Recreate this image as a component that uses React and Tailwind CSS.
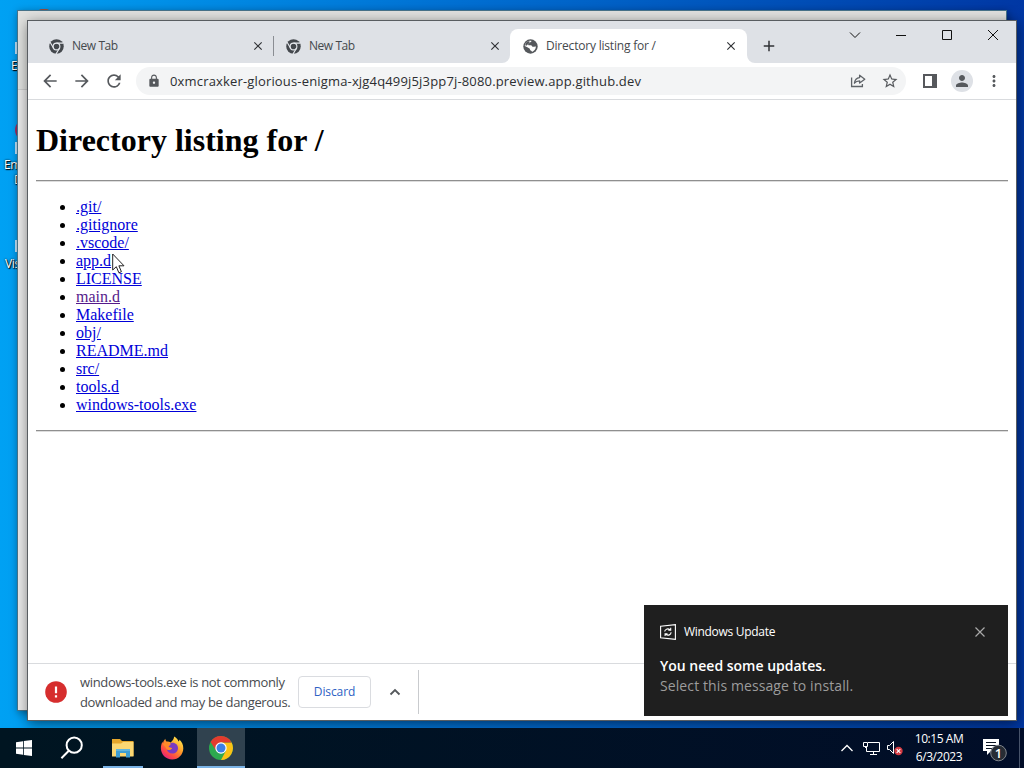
import { MdArrowBack, MdArrowForward, MdRefresh, MdLock, MdStarBorder, MdPerson, MdMoreVert, MdClose, MdAdd } from 'react-icons/md';

const files = [
  '.git/',
  '.gitignore',
  '.vscode/',
  'app.d',
  'LICENSE',
  'main.d',
  'Makefile',
  'obj/',
  'README.md',
  'src/',
  'tools.d',
  'windows-tools.exe',
];

const visited = ['main.d'];

const ShareIcon = () => (
  <svg width="16" height="16" viewBox="0 0 16 16" fill="none" stroke="#5f6368" strokeWidth="1.3">
    <path d="M1.6 4.5V13.5H12.4V11" />
    <path d="M4.4 10.2C4.8 7 6.4 4.9 9.6 4.6V2.2L14.8 6.2L9.6 10V7.8C7.4 7.8 5.7 8.5 4.4 10.2Z" strokeLinejoin="round" />
  </svg>
);

const SidePanelIcon = () => (
  <svg width="14" height="14" viewBox="0 0 14 14">
    <path d="M0 0H14V14H0Z" fill="#56585c" />
    <path d="M2 2H9V12H2Z" fill="#fff" />
  </svg>
);

const ChromeMono = () => (
  <svg width="15" height="15" viewBox="0 0 24 24">
    <circle cx="12" cy="12" r="11.6" fill="#44484d" />
    <g fill="none" stroke="#e6e9ee" strokeWidth="1.8">
      <circle cx="12" cy="12" r="5.4" />
      <path d="M12 6.6H23M16.7 14.7L11.2 24.2M7.3 14.7L1.8 5.2" />
    </g>
  </svg>
);

const GlobeIcon = () => (
  <svg width="15" height="15" viewBox="0 0 15 15">
    <circle cx="7.5" cy="7.5" r="7.2" fill="#55585c" />
    <path d="M8.3 1.7C8.8 3 7.5 3.2 6.6 3.6C5.9 4 6.3 5 5.4 5.2C4.7 5.4 4.9 6.2 5.7 6.2H8C9 6.3 8.8 7.6 9.8 7.8C10.9 8 11.3 7.2 12.9 7.5C13 10 11.2 12.2 8.9 12.9C9 11.9 8.3 11.7 7.6 11.5C6.8 11.2 7.2 9.9 6.5 9.5C5.2 8.8 3.7 8.1 1.8 7.1C1.9 3.9 4.8 1.4 8.3 1.7Z" fill="#fff" />
    <path d="M3.4 3.3L6.2 2L6.6 3.4C5.8 3.9 6 4.8 5.2 5.1C4.1 5.6 4.4 6.9 3.2 6.6L2 6.2Z" fill="#55585c" />
  </svg>
);

const ChromeLogo = () => (
  <svg width="24" height="24" viewBox="0 0 24 24">
    <circle cx="12" cy="12" r="12" fill="#2da94f" />
    <path d="M12 6.4H22.6A12 12 0 0 1 12 24L16.9 14.8Z" fill="#fbc116" />
    <path d="M7.2 14.8L1.6 6A12 12 0 0 1 22.5 6.4H12Z" fill="#e33b2e" />
    <circle cx="12" cy="12" r="5.7" fill="#fff" />
    <circle cx="12" cy="12" r="4.5" fill="#3c7fe6" />
  </svg>
);

const FirefoxLogo = () => (
  <svg width="24" height="24" viewBox="0 0 24 24">
    <defs>
      <linearGradient id="fox" x1="0.85" y1="0.1" x2="0.2" y2="0.95">
        <stop offset="0" stopColor="#ffe34a" />
        <stop offset="0.4" stopColor="#ff9a28" />
        <stop offset="0.75" stopColor="#ff4a45" />
        <stop offset="1" stopColor="#e5217e" />
      </linearGradient>
    </defs>
    <path d="M14.2 0.6C17.6 2.6 18 4.4 18.6 5.6C19.4 5 19.5 4.2 19.4 3.6C22 6 23.3 9 23.3 12.4C23.2 18.6 18.3 23.4 12.2 23.4C5.8 23.4 0.9 18.5 0.9 12.3C0.9 9.8 1.5 7.5 2.4 5.8L3 7.2C3.4 5.2 4.2 3.8 5.4 2.7C5.4 4 5.8 4.8 6.5 5.5C8 5.2 9.6 5.6 10.6 6.4C12.5 5.3 13.7 3.4 14.2 0.6Z" fill="url(#fox)" />
    <path d="M10.5 7C14.5 5.6 18 8.4 18 12C18 15.4 15.5 17.6 12.4 17.6C9.4 17.6 7.2 15.8 6.8 13.3C8.5 14.5 10.2 14 12.2 12.3C10.7 11.6 8.8 12 8.4 10.5C8.6 9.4 10.6 9.6 10.5 7Z" fill="#7a3bc2" />
    <path d="M2.8 8.2C5.3 6 8.4 6.3 10.6 8.2C10.2 9.4 8.5 9.4 8.4 10.6C9 11.9 11 11.2 12.2 12.3C10.3 14.4 8.4 14.5 6.8 13.3C5.8 11.2 4.3 9.7 2.8 8.2Z" fill="#ff8a2a" />
  </svg>
);

const ExplorerIcon = () => (
  <svg width="22" height="20" viewBox="0 0 22 20">
    <path d="M0 1H8L10 3H21.5V18H0Z" fill="#e5a62c" />
    <path d="M0 5.5H9L11 4H21.5V18.5H0Z" fill="#fbd773" />
    <path d="M4 11H18V19.5H14V15H8V19.5H4Z" fill="#3e9ed4" />
    <path d="M4 11H18V13H4Z" fill="#62b5dd" />
  </svg>
);

const Tab = ({ title, active, divider, icon }) => (
  <div className={`relative flex h-[34px] items-center pl-3 ${active ? 'w-[237px] rounded-t-lg bg-white' : 'w-[237px]'}`}>
    <span className="flex w-4 justify-center">{icon}</span>
    <span className={`ml-2 flex-1 text-[12px] whitespace-nowrap text-[#45494d] ${active ? 'tracking-[-0.2px]' : 'tracking-[-0.45px]'}`}>{title}</span>
    <MdClose className={`size-[14px] text-[#303236] ${active ? 'mr-[9px]' : 'mr-2'}`} />
    {divider && <span className="absolute top-[7px] -right-px h-5 w-px bg-[#8a8d93]" />}
    {active && (
      <>
        <svg className="absolute bottom-0 -left-2" width="8" height="8"><path d="M8 0V8H0A8 8 0 0 0 8 0Z" fill="#fff" /></svg>
        <svg className="absolute -right-2 bottom-0" width="8" height="8"><path d="M0 0V8H8A8 8 0 0 1 0 0Z" fill="#fff" /></svg>
      </>
    )}
  </div>
);

const TabStrip = () => (
  <div className="flex h-[42px] shrink-0 bg-[#dee1e6] pt-2 pl-2">
    <Tab title="New Tab" divider icon={<ChromeMono />} />
    <Tab title="New Tab" icon={<ChromeMono />} />
    <Tab title="Directory listing for /" active icon={<GlobeIcon />} />
    <MdAdd className="mt-2 ml-[13px] size-[18px] text-[#303236]" />
    <div className="ml-auto flex h-3 items-center gap-[34px] pr-[17px]">
      <svg width="12" height="12" viewBox="0 0 12 12" fill="none" stroke="#111"><path d="M1 3.5L6 8.5L11 3.5" /></svg>
      <svg width="12" height="12" viewBox="0 0 12 12" fill="none" stroke="#111"><path d="M1 6.5H11" /></svg>
      <svg width="12" height="12" viewBox="0 0 12 12" fill="none" stroke="#111"><path d="M1.5 1.5H10.5V10.5H1.5Z" /></svg>
      <svg width="12" height="12" viewBox="0 0 12 12" fill="none" stroke="#111"><path d="M1 1L11 11M11 1L1 11" /></svg>
    </div>
  </div>
);

const Toolbar = () => (
  <div className="flex h-[37px] shrink-0 items-center border-b border-[#d9dbde] bg-white pl-3 text-[#56595d]">
    <MdArrowBack className="size-5" />
    <MdArrowForward className="ml-3 size-5" />
    <MdRefresh className="ml-3 size-5" />
    <div className="ml-3 flex h-7 w-[770px] items-center rounded-full bg-[#f3f4f5] pr-[7px] pl-[11px]">
      <MdLock className="size-[14px]" />
      <span className="mt-0.5 ml-[9px] flex-1 text-[13px] tracking-[0.165px] whitespace-nowrap text-[#2c2e31]">
        0xmcraxker-glorious-enigma-xjg4q499j5j3pp7j-8080.preview.app.github.dev
      </span>
      <ShareIcon />
      <MdStarBorder className="ml-[15px] size-[18px]" />
    </div>
    <div className="ml-[17px] flex items-center">
      <SidePanelIcon />
      <span className="ml-[14px] flex size-[22px] items-center justify-center rounded-full bg-[#dee1e6]">
        <MdPerson className="size-[18px]" />
      </span>
      <MdMoreVert className="ml-3 size-[18px]" />
    </div>
  </div>
);

const Listing = () => (
  <div className="flex-1 bg-white px-2 font-['Liberation_Serif',serif] text-black">
    <h1 className="pt-[22px] text-[32px] leading-[37px] font-bold">Directory listing for /</h1>
    <hr className="mt-[21px] h-0.5 border-0 border-t border-b border-t-[#8f8f8f] border-b-[#dddddd]" />
    <ul className="mt-4 list-disc pl-10 text-[16px] leading-[18px]">
      {files.map((name) => (
        <li key={name}>
          <a className={`underline ${visited.includes(name) ? 'text-[#551a8b]' : 'text-[#0000d8]'}`}>{name}</a>
        </li>
      ))}
    </ul>
    <hr className="mt-4 h-0.5 border-0 border-t border-b border-t-[#8f8f8f] border-b-[#dddddd]" />
  </div>
);

const DownloadShelf = () => (
  <div className="flex h-[57px] shrink-0 items-center border-t border-[#d9dbde] bg-white pl-[17px]">
    <svg width="22" height="22" viewBox="0 0 22 22">
      <circle cx="11" cy="11" r="10.8" fill="#d62e2e" />
      <path d="M9.9 5.5H12.1V12.3H9.9ZM9.9 14.2H12.1V16.4H9.9Z" fill="#fff" />
    </svg>
    <p className="ml-[13px] w-[218px] text-[13px] leading-5 tracking-[-0.34px] whitespace-nowrap text-[#484b4f]">
      windows-tools.exe is not commonly
      <br />
      downloaded and may be dangerous.
    </p>
    <button className="h-8 w-[73px] rounded border border-[#dadce0] text-[12px] font-medium tracking-[-0.1px] text-[#2e62c4]">Discard</button>
    <svg className="ml-[18px]" width="12" height="8" viewBox="0 0 12 8" fill="none" stroke="#55585c" strokeWidth="1.8"><path d="M1.5 6.5L6 2L10.5 6.5" /></svg>
    <span className="ml-[17px] h-11 w-px bg-[#c9cbce]" />
  </div>
);

const Toast = () => (
  <div className="absolute top-[605px] left-[644px] h-[111px] w-[364px] bg-[#1f1f1f] px-4 pt-[18px]">
    <div className="flex h-[18px] items-center">
      <svg width="16" height="16" viewBox="0 0 16 16" fill="none" stroke="#fff" strokeWidth="1.1">
        <path d="M0.6 2.3L15.4 0.6V15.4L0.6 13.7Z" />
        <path d="M4.7 7.6C4.8 5.3 7.6 4 10 5.7M10.7 3.8V6.2H8.3M11.1 8.3C11 10.8 8.2 12 5.8 10.2M5.1 12V9.7H7.5" />
      </svg>
      <span className="ml-2 flex-1 text-[12px] tracking-[-0.3px] text-white">Windows Update</span>
      <svg className="mr-[7px]" width="10" height="10" viewBox="0 0 10 10" stroke="#a9a9a9" strokeWidth="1.2"><path d="M0.5 0.5L9.5 9.5M9.5 0.5L0.5 9.5" /></svg>
    </div>
    <p className="mt-[15px] text-[14px] leading-5 font-semibold whitespace-nowrap text-white">You need some updates.</p>
    <p className="text-[14px] leading-5 tracking-[0.1px] whitespace-nowrap text-[#9c9c9c]">Select this message to install.</p>
  </div>
);

const Taskbar = () => (
  <div className="absolute inset-x-0 bottom-0 flex h-10 items-center bg-linear-to-r from-[#001521] to-[#010d28]">
    <div className="flex h-10 w-12 items-center justify-center">
      <svg width="16" height="16" viewBox="0 0 16 16" fill="#fff"><path d="M0 2.2L7 1.2V7.6H0ZM7.8 1.1L16 0V7.6H7.8ZM0 8.4H7V14.8L0 13.8ZM7.8 8.4H16V16L7.8 14.9Z" /></svg>
    </div>
    <div className="flex h-10 w-12 items-center justify-center">
      <svg width="24" height="24" viewBox="0 0 24 24" fill="none" stroke="#fff" strokeWidth="2"><circle cx="14.2" cy="9.2" r="7.6" /><path d="M8.8 14.8L1.4 22.2" /></svg>
    </div>
    <div className="ml-[7px] flex h-10 w-10 items-center justify-center border-b-2 border-[#7ab3e6] pt-0.5">
      <ExplorerIcon />
    </div>
    <div className="ml-[5px] flex h-10 w-[47px] items-center justify-center">
      <FirefoxLogo />
    </div>
    <div className="ml-0.5 flex h-10 w-12 items-center justify-center border-b-2 border-[#7ab3e6] bg-[#30424f] pt-0.5">
      <ChromeLogo />
    </div>
    <div className="ml-auto flex h-10 items-center">
      <svg width="12" height="8" viewBox="0 0 12 8" fill="none" stroke="#fff" strokeWidth="1.3"><path d="M0.5 7L6 1.5L11.5 7" /></svg>
      <svg className="ml-2.5" width="17" height="15" viewBox="0 0 17 15" fill="none" stroke="#fff">
        <path d="M5 1.5H16.5V10.5H3.5V6M10.5 10.5V13.5M7 13.5H14M0.5 1.5H4.5V5.5H0.5ZM2.5 5.5V7" />
      </svg>
      <svg className="ml-[6px]" width="18" height="16" viewBox="0 0 18 16" fill="none">
        <path d="M1.5 5.5H3.5L7.5 1.5V13.5L3.5 9.5H1.5Z" stroke="#fff" />
        <circle cx="12.5" cy="11" r="4.2" fill="#d43b43" />
        <path d="M10.7 9.2L14.3 12.8M14.3 9.2L10.7 12.8" stroke="#fff" strokeWidth="1.1" />
      </svg>
      <div className="ml-1.5 w-[58px] text-center text-[12px] leading-[18px] tracking-[-0.45px] whitespace-nowrap text-white">
        <div>10:15 AM</div>
        <div>6/3/2023</div>
      </div>
      <svg className="mt-1 ml-[14px]" width="26" height="26" viewBox="0 0 26 26">
        <path d="M1 2H17V14H9L5 18V14H1Z" fill="#fff" />
        <path d="M4 5.5H14M4 8.5H14M4 11.5H10" stroke="#0c1524" />
        <circle cx="16.5" cy="16" r="7.8" fill="#272c34" stroke="#80858c" />
        <text x="16.5" y="20.5" textAnchor="middle" fontSize="13" fontWeight="600" fill="#fff">1</text>
      </svg>
      <span className="ml-[11px] h-10 w-px bg-[#47536a]" />
      <span className="w-[4px]" />
    </div>
  </div>
);

// only the slivers left of the windows stay visible
const DesktopIcons = () => (
  <div className="absolute top-0 left-0 h-[728px] w-[50px] overflow-hidden text-[12px] text-white [text-shadow:1px_1px_1px_#000,0_0_2px_#000]">
    <span className="absolute top-[9px] left-[38px] h-2 w-3 rounded-full bg-[#a65340]" />
    <span className="absolute top-[42px] left-[15px] h-3 w-4 bg-[#c3e4fb]" />
    <span className="absolute top-[57px] left-[11px]">E</span>
    <span className="absolute top-[119px] left-[15px] h-[22px] w-[22px] rounded-full bg-[#a32d60]" />
    <span className="absolute top-[142px] left-[15px] h-3 w-4 bg-[#c3e4fb]" />
    <span className="absolute top-[156px] left-[4px] tracking-[-0.5px] whitespace-nowrap">Empty</span>
    <span className="absolute top-[171px] left-[14px]">D</span>
    <span className="absolute top-[240px] left-[15px] h-3 w-4 bg-[#c3e4fb]" />
    <span className="absolute top-[255px] left-[5px] tracking-[-0.3px] whitespace-nowrap">Visual</span>
  </div>
);

export default function App() {
  return (
    <div className="relative h-[768px] w-[1024px] overflow-hidden bg-linear-to-r from-[#00a1f3] via-[#006fd2] via-45% to-[#0037a4] font-['Open_Sans','Noto_Sans',sans-serif]">
      <DesktopIcons />
      <div className="absolute top-[10px] left-[17px] h-[701px] w-[990px] border border-[#477389] bg-[#e9e9e9] shadow-[1px_2px_8px_rgba(0,0,0,0.4)]">
        <div className="h-[79px] border-b border-[#cccccc] bg-[#e0e1df]" />
      </div>
      <div className="absolute top-5 left-[27px] flex h-[701px] w-[990px] flex-col border border-[#595d61] bg-white shadow-[1px_3px_12px_rgba(0,0,0,0.5)]">
        <TabStrip />
        <Toolbar />
        <Listing />
        <DownloadShelf />
      </div>
      <Toast />
      <Taskbar />
      <svg className="absolute top-[253px] left-[112px]" width="13" height="21" viewBox="0 0 13 21">
        <path d="M0.7 1V17L4.3 13.7L6.9 19.8L9.4 18.7L6.9 12.8H12Z" fill="#fff" stroke="#222" strokeWidth="1" />
      </svg>
    </div>
  );
}
